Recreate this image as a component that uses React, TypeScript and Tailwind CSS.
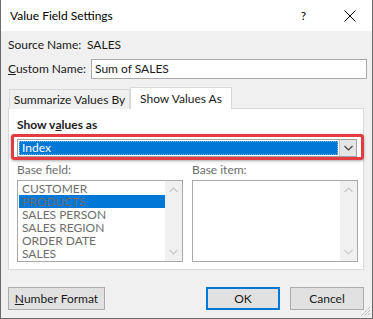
import React from "react";

const font = { fontFamily: 'Lato, "Noto Sans", sans-serif' };

function Chevron({ up, color }: { up?: boolean; color: string }) {
  return (
    <svg width="9" height="6" viewBox="0 0 9 6">
      <path
        d={up ? "M0.5 5 L4.5 1 L8.5 5" : "M0.5 1 L4.5 5 L8.5 1"}
        fill="none"
        stroke={color}
        strokeWidth="1.2"
      />
    </svg>
  );
}

function ListBox({ items, selected }: { items: string[]; selected?: number }) {
  return (
    <div className="flex h-[82px] w-[166px] border border-[#a9a9a9] bg-white">
      <div className="flex flex-1 flex-col pl-[1px] pt-[1px]">
        {items.map((it, i) => (
          <div
            key={it}
            className={`flex h-[13px] items-center overflow-hidden whitespace-nowrap pl-[3px] text-[12px] leading-[13px] text-[#6d6d6d] ${
              i === selected ? "bg-[#0078d7]" : ""
            }`}
          >
            {it}
          </div>
        ))}
      </div>
      <div className="flex w-[17px] flex-col items-center justify-between bg-[#f0f0f0] py-[6px]">
        <Chevron up color="#c8c8c8" />
        <Chevron color="#c8c8c8" />
      </div>
    </div>
  );
}

export default function App() {
  return (
    <div
      className="relative flex h-[319px] w-[373px] flex-col overflow-hidden whitespace-nowrap border-x border-b border-[#6a6a6a] bg-[#f0f0f0] text-[12px] leading-[14px] text-[#1a1a1a]"
      style={font}
    >
      {/* title bar */}
      <div className="flex h-[31px] shrink-0 items-center bg-white pl-[9px]">
        <span className="flex-1 text-[12px] text-black">Value Field Settings</span>
        <span className="mr-[38px] text-[12px] text-black">?</span>
        <svg width="12" height="12" viewBox="0 0 12 12" className="mr-[16px]">
          <path d="M0.5 0.5 L11.5 11.5 M11.5 0.5 L0.5 11.5" stroke="#000" strokeWidth="1" />
        </svg>
      </div>

      {/* source name */}
      <div className="mt-[6px] flex h-[16px] items-center pl-[7px]">
        <span className="w-[79px]">Source Name:</span>
        <span>SALES</span>
      </div>

      {/* custom name */}
      <div className="mt-[6px] flex h-[20px] items-center pl-[7px]">
        <span className="w-[83px]">
          <u>C</u>ustom Name:
        </span>
        <div className="flex h-[20px] w-[276px] items-center border border-[#a9a9a9] bg-white pl-[3px]">
          Sum of SALES
        </div>
      </div>

      {/* tabs */}
      <div className="relative z-10 mt-[8px] flex h-[22px] items-end pl-[8px]">
        <div className="flex h-[20px] w-[121px] items-center justify-center border border-b-0 border-[#d9d9d9] bg-[#f0f0f0]">
          Summarize Values By
        </div>
        <div className="flex h-[22px] w-[102px] items-center justify-center border border-b-0 border-[#d9d9d9] bg-white">
          Show Values As
        </div>
      </div>

      {/* panel */}
      <div className="mx-[7px] -mt-[1px] flex h-[162px] w-[356px] flex-col border border-[#d9d9d9] bg-white pl-[8px] pr-[5px]">
        <div className="mt-[9px] flex h-[14px] items-center font-bold">
          Show v<u>a</u>lues as
        </div>
        <div className="relative mt-[7px] flex h-[18px] w-[340px] border border-[#a3a3a3] bg-white">
          <div className="pointer-events-none absolute -bottom-[4px] -left-[7px] -right-[8px] -top-[6px] rounded-[3px] border-[3px] border-[#e23b41] shadow-[0_1px_3px_rgba(0,0,0,0.35)]" />
          <div className="m-[1px] flex flex-1 items-center border border-dotted border-[#ffffff80] bg-[#0078d7] pl-[2px] text-[12px] text-white">
            Index
          </div>
          <div className="flex w-[17px] items-center justify-center border-l border-[#c8c8c8] bg-[#e5e5e5]">
            <Chevron color="#444" />
          </div>
        </div>
        <div className="mt-[6px] flex h-[14px] text-[#6d6d6d]">
          <span className="w-[175px]">Base field:</span>
          <span>Base item:</span>
        </div>
        <div className="mt-[3px] flex gap-[9px]">
          <ListBox
            items={["CUSTOMER", "PRODUCTS", "SALES PERSON", "SALES REGION", "ORDER DATE", "SALES"]}
            selected={1}
          />
          <ListBox items={[]} />
        </div>
      </div>

      {/* buttons */}
      <div className="mt-[17px] flex h-[23px] items-center pl-[7px] pr-[8px]">
        <div className="flex h-[23px] w-[97px] items-center justify-center border border-[#adadad] bg-[#e1e1e1]">
          <span>
            <u>N</u>umber Format
          </span>
        </div>
        <div className="flex-1" />
        <div className="flex h-[23px] w-[74px] items-center justify-center border-2 border-[#0078d7] bg-[#e1e1e1]">
          OK
        </div>
        <div className="ml-[10px] flex h-[23px] w-[74px] items-center justify-center border border-[#adadad] bg-[#e1e1e1]">
          Cancel
        </div>
      </div>

      {/* resize grip */}
      <svg width="10" height="10" viewBox="0 0 10 10" className="absolute bottom-[1px] right-[1px]">
        <path d="M9 3 L3 9 M9 6 L6 9 M9 0 L0 9" stroke="#a0a0a0" strokeWidth="1" strokeDasharray="1 1" />
      </svg>
    </div>
  );
}
